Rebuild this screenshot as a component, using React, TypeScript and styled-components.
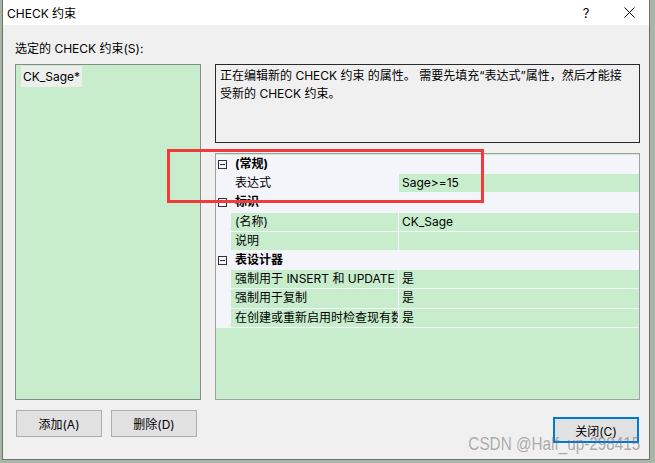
import React from 'react';
import styled, { createGlobalStyle } from 'styled-components';

const GREEN = '#c7edcc';
const LIGHT = '#f3f5fa';
const FONT = 'Inter, "Noto Sans CJK SC", sans-serif';

const GlobalStyle = createGlobalStyle`
  html, body {
    margin: 0;
    padding: 0;
    background: #aab5aa;
  }
  body {
    font-family: ${FONT};
    font-size: 12px;
    color: #000;
  }
`;

const Screen = styled.div`
  width: 655px;
  height: 463px;
  padding-left: 2px;
  box-sizing: border-box;
  overflow: hidden;
`;

const Window = styled.div`
  position: relative;
  width: 648px;
  height: 460px;
  box-sizing: border-box;
  border: 1px solid #707070;
  border-top: none;
  display: flex;
  flex-direction: column;
  background: #f0f0f0;
`;

const TitleBar = styled.div`
  height: 25px;
  background: #fff;
  display: flex;
  align-items: center;
  padding-left: 4px;
`;

const Title = styled.span`
  font-size: 12px;
  flex: 1;
`;

const TitleButton = styled.span<{ w: number }>`
  width: ${({ w }) => w}px;
  display: flex;
  justify-content: center;
  align-items: center;
  font-size: 13px;
`;

const Body = styled.div`
  flex: 1;
  display: flex;
  flex-direction: column;
  padding: 16px 9px 0 12px;
`;

const Label = styled.div`
  line-height: 16px;
  height: 16px;
  margin-bottom: 7px;
`;

const Main = styled.div`
  display: flex;
  gap: 14px;
  height: 336px;
`;

const ListBox = styled.div`
  width: 186px;
  box-sizing: border-box;
  border: 1px solid #8a8a8a;
  background: ${GREEN};
  padding: 1px 0 0 5px;
`;

const ListItem = styled.div`
  display: inline-block;
  height: 21px;
  line-height: 21px;
  padding: 0 2px;
  background: #ecefec;
`;

const RightCol = styled.div`
  width: 425px;
  display: flex;
  flex-direction: column;
  gap: 10px;
`;

const Description = styled.div`
  height: 79px;
  box-sizing: border-box;
  border: 1px solid #2a2a2a;
  padding: 2px 4px;
  line-height: 18px;
`;

const Grid = styled.div`
  flex: 1;
  box-sizing: border-box;
  border: 1px solid #a0a0a0;
  padding-top: 1px;
  background: ${GREEN};
  overflow: hidden;
`;

const Row = styled.div<{ category?: boolean }>`
  display: grid;
  grid-template-columns: 14px 167px 1fr;
  column-gap: 1px;
  height: 18.2px;
  line-height: 18px;
  border-bottom: 1px solid ${LIGHT};
  background: ${LIGHT};
  font-weight: ${({ category }) => (category ? 700 : 400)};
`;

const Gutter = styled.div`
  display: flex;
  align-items: center;
  padding-left: 2px;
`;

const Expander = styled.span`
  position: relative;
  width: 9px;
  height: 9px;
  box-sizing: border-box;
  border: 1px solid #333;
  &::after {
    content: '';
    position: absolute;
    left: 1px;
    top: 3px;
    width: 5px;
    height: 1px;
    background: #333;
  }
`;

const Cell = styled.div<{ bg?: string; pad?: number }>`
  background: ${({ bg }) => bg || 'transparent'};
  padding-left: ${({ pad = 4 }) => pad}px;
  white-space: nowrap;
  overflow: hidden;
`;

const Footer = styled.div`
  display: flex;
  align-items: flex-start;
  gap: 9px;
  margin-top: 10px;
  padding-left: 1px;
`;

const Button = styled.button<{ focused?: boolean }>`
  width: 86px;
  height: ${({ focused }) => (focused ? 26 : 27)}px;
  box-sizing: border-box;
  background: #e1e1e1;
  border: ${({ focused }) => (focused ? '2px solid #0078d7' : '1px solid #adadad')};
  font-family: ${FONT};
  font-size: 12px;
  color: #000;
  padding: 0;
  margin-top: ${({ focused }) => (focused ? 7 : 0)}px;
  margin-left: ${({ focused }) => (focused ? 'auto' : '0')};
  margin-right: ${({ focused }) => (focused ? 1 : 0)}px;
`;

const Highlight = styled.div`
  position: absolute;
  left: 164px;
  top: 149px;
  width: 317px;
  height: 54px;
  box-sizing: border-box;
  border: 3px solid #ef3b3b;
  pointer-events: none;
`;

const Watermark = styled.div`
  position: absolute;
  right: 9px;
  top: 434px;
  font-family: "Liberation Sans", sans-serif;
  font-size: 18px;
  color: rgba(110, 110, 110, 0.55);
  transform: scaleX(0.85);
  transform-origin: right center;
  white-space: nowrap;
  pointer-events: none;
`;

type Prop = { name: string; value?: string; nameBg?: string };
type Section = { title: string; props: Prop[] };

const sections: Section[] = [
  { title: '(常规)', props: [{ name: '表达式', value: 'Sage>=15', nameBg: LIGHT }] },
  { title: '标识', props: [{ name: '(名称)', value: 'CK_Sage' }, { name: '说明', value: '' }] },
  {
    title: '表设计器',
    props: [
      { name: '强制用于 INSERT 和 UPDATE', value: '是' },
      { name: '强制用于复制', value: '是' },
      { name: '在创建或重新启用时检查现有数据', value: '是' },
    ],
  },
];

const CloseIcon = () => (
  <svg width="11" height="11" viewBox="0 0 11 11">
    <path d="M0.5 0.5 L10.5 10.5 M10.5 0.5 L0.5 10.5" stroke="#000" strokeWidth="1" fill="none" />
  </svg>
);

const App = () => (
  <>
    <GlobalStyle />
    <Screen>
      <Window>
        <TitleBar>
          <Title>CHECK 约束</Title>
          <TitleButton w={46}>?</TitleButton>
          <TitleButton w={40}>
            <CloseIcon />
          </TitleButton>
        </TitleBar>
        <Body>
          <Label>选定的 CHECK 约束(S):</Label>
          <Main>
            <ListBox>
              <ListItem>CK_Sage*</ListItem>
            </ListBox>
            <RightCol>
              <Description>
                正在编辑新的 CHECK 约束 的属性。 需要先填充“表达式”属性，然后才能接
                <br />
                受新的 CHECK 约束。
              </Description>
              <Grid>
                {sections.map((s) => (
                  <React.Fragment key={s.title}>
                    <Row category>
                      <Gutter>
                        <Expander />
                      </Gutter>
                      <Cell>{s.title}</Cell>
                      <Cell />
                    </Row>
                    {s.props.map((p) => (
                      <Row key={p.name}>
                        <Gutter />
                        <Cell bg={p.nameBg || GREEN}>{p.name}</Cell>
                        <Cell bg={GREEN} pad={3}>
                          {p.value}
                        </Cell>
                      </Row>
                    ))}
                  </React.Fragment>
                ))}
              </Grid>
            </RightCol>
          </Main>
          <Footer>
            <Button>添加(A)</Button>
            <Button>删除(D)</Button>
            <Button focused>关闭(C)</Button>
          </Footer>
        </Body>
        <Highlight />
        <Watermark>CSDN @Half_up-298415</Watermark>
      </Window>
    </Screen>
  </>
);

export default App;
